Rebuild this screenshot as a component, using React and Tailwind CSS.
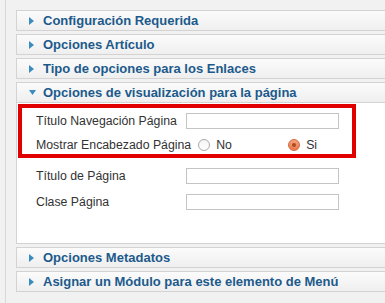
import React from "react";

function Arrow({ open }) {
  return open ? (
    <svg width="7" height="5" viewBox="0 0 7 5" className="shrink-0">
      <path d="M0 0 L7 0 L3.5 5 Z" fill="#3a8cc0" />
    </svg>
  ) : (
    <svg width="5" height="8" viewBox="0 0 5 8" className="shrink-0">
      <path d="M0 0 L5 4 L0 8 Z" fill="#3a8cc0" />
    </svg>
  );
}

function Header({ title, open, className = "" }) {
  return (
    <div
      className={
        "h-[21px] flex items-center border border-[#d3d3d3] bg-gradient-to-b from-[#fbfbfb] to-[#efefef] pl-[12px] " +
        className
      }
    >
      <div className={open ? "w-[7px] flex" : "w-[5px] flex"}>
        <Arrow open={open} />
      </div>
      <span
        className={
          (open ? "ml-[7px]" : "ml-[9px]") +
          " text-[13px] font-bold text-[#1c5a8c] whitespace-nowrap leading-none"
        }
      >
        {title}
      </span>
    </div>
  );
}

function Input() {
  return (
    <div className="w-[153px] h-[16px] border border-[#c4c4c4] bg-white shrink-0" />
  );
}

export default function App() {
  return (
    <div
      className="w-[385px] h-[303px] overflow-hidden bg-[#f1f1f1] pl-[5px]"
      style={{ fontFamily: '"Liberation Sans", Arial, sans-serif' }}
    >
      <div className="h-full border-l border-[#d8d8d8] pl-[10px] pt-[10px]">
        <div className="w-[400px] flex flex-col">
          <Header title="Configuración Requerida" />
          <Header title="Opciones Artículo" className="mt-[3px]" />
          <Header title="Tipo de opciones para los Enlaces" className="mt-[3px]" />
          <Header title="Opciones de visualización para la página" open className="mt-[3px]" />
          <div className="h-[141px] border-x border-b border-[#d3d3d3] bg-white pl-[1px] pt-[1px] text-[12.3px] text-[#333]">
            <div className="w-[338px] border-4 border-[#e00000] pt-[5px] pb-[1px] pl-[14px] flex flex-col gap-[8px]">
              <div className="h-[16px] flex items-center">
                <span className="w-[150px] whitespace-nowrap">Título Navegación Página</span>
                <Input />
              </div>
              <div className="h-[16px] flex items-center">
                <span className="whitespace-nowrap">Mostrar Encabezado Página</span>
                <div className="ml-[7px] w-[90px] flex items-center">
                  <span className="w-[12px] h-[12px] rounded-full border border-[#a9a9a9] bg-gradient-to-b from-[#f4f4f4] to-white" />
                  <span className="ml-[6px]">No</span>
                </div>
                <div className="flex items-center">
                  <span className="w-[12px] h-[12px] rounded-full border border-[#d2693f] bg-gradient-to-b from-[#f5a27c] to-[#e8794c] flex items-center justify-center">
                    <span className="w-[4px] h-[4px] rounded-full bg-[#b04a20]" />
                  </span>
                  <span className="ml-[6px]">Si</span>
                </div>
              </div>
            </div>
            <div className="pl-[18px] mt-[10px] flex flex-col gap-[10px]">
              <div className="h-[16px] flex items-center">
                <span className="w-[150px] whitespace-nowrap">Título de Página</span>
                <Input />
              </div>
              <div className="h-[16px] flex items-center">
                <span className="w-[150px] whitespace-nowrap">Clase Página</span>
                <Input />
              </div>
            </div>
          </div>
          <Header title="Opciones Metadatos" className="mt-[3px]" />
          <Header title="Asignar un Módulo para este elemento de Menú" className="mt-[3px]" />
        </div>
      </div>
    </div>
  );
}
